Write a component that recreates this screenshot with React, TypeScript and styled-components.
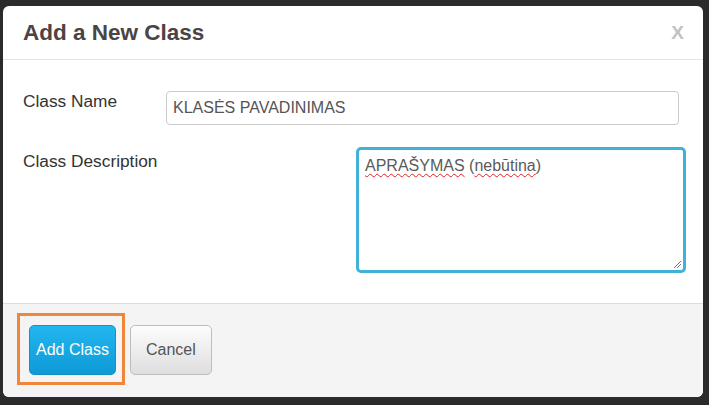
import React from 'react';
import styled, { createGlobalStyle } from 'styled-components';

const GlobalStyle = createGlobalStyle`
  html, body {
    margin: 0;
    padding: 0;
    background: #2b2b2b;
    font-family: "Liberation Sans", Arial, sans-serif;
  }
  * { box-sizing: border-box; }
`;

const Page = styled.div`
  width: 709px;
  height: 405px;
  padding: 6px 0 0 3px;
  background: #2b2b2b;
`;

const Dialog = styled.div`
  width: 700px;
  height: 391px;
  background: #fff;
  border-radius: 6px;
  overflow: hidden;
  display: flex;
  flex-direction: column;
`;

const Header = styled.div`
  height: 54px;
  display: flex;
  align-items: center;
  justify-content: space-between;
  padding: 0 19px 0 20px;
  border-bottom: 1px solid #e5e5e5;
`;

const Title = styled.h3`
  margin: 0;
  font-size: 22.5px;
  font-weight: bold;
  color: #4b4344;
`;

const Close = styled.button`
  border: none;
  background: none;
  padding: 0;
  font-family: inherit;
  font-size: 19px;
  font-weight: bold;
  color: #c2c2c2;
  cursor: pointer;
`;

const Body = styled.div`
  flex: 1;
  padding: 31px 0 0 20px;
  display: flex;
  flex-direction: column;
  gap: 23px;
`;

const Row = styled.div`
  display: flex;
  align-items: flex-start;
`;

const Label = styled.label<{ $width: number; $top: number }>`
  width: ${(p) => p.$width}px;
  flex-shrink: 0;
  padding-top: ${(p) => p.$top}px;
  font-size: 17.3px;
  color: #333;
`;

const Input = styled.input`
  width: 513px;
  height: 34px;
  border: 1px solid #ccc;
  border-radius: 4px;
  padding: 0 6px;
  font-family: inherit;
  font-size: 16px;
  color: #555;
  outline: none;
`;

const TextArea = styled.div`
  position: relative;
  width: 330px;
  height: 126px;
  margin-top: -1px;
  border: 3px solid #41b1da;
  border-radius: 5px;
  padding: 7px 6px;
  font-size: 16px;
  color: #5a5a5a;
  outline: none;
`;

const Misspelled = styled.span`
  text-decoration: underline wavy #e02020;
  text-decoration-thickness: 1px;
  text-underline-offset: 2px;
`;

const Grip = styled.svg`
  position: absolute;
  right: 1px;
  bottom: 1px;
`;

const Footer = styled.div`
  height: 94px;
  background: #f4f4f4;
  border-top: 1px solid #dcdcdc;
  display: flex;
  align-items: flex-start;
  padding: 9px 0 0 14px;
`;

const Highlight = styled.div`
  border: 3px solid #f0863a;
  padding: 9px 6px 7px 9px;
`;

const Button = styled.button<{ $primary?: boolean }>`
  height: 50px;
  padding: 0 ${(p) => (p.$primary ? 6 : 15)}px;
  border-radius: 5px;
  font-family: inherit;
  font-size: 16px;
  cursor: pointer;
  color: ${(p) => (p.$primary ? '#fff' : '#555')};
  border: 1px solid ${(p) => (p.$primary ? '#1591c4' : '#bdbdbd')};
  background: ${(p) =>
    p.$primary
      ? 'linear-gradient(#22b6f0, #0e9ad6)'
      : 'linear-gradient(#fdfdfd, #dedede)'};
`;

const CancelWrap = styled.div`
  padding-top: 12px;
  margin-left: 5px;
`;

export default function App() {
  return (
    <Page>
      <GlobalStyle />
      <Dialog>
        <Header>
          <Title>Add a New Class</Title>
          <Close>X</Close>
        </Header>
        <Body>
          <Row>
            <Label $width={143} $top={0}>Class Name</Label>
            <Input defaultValue="KLASĖS PAVADINIMAS" />
          </Row>
          <Row>
            <Label $width={333} $top={3}>Class Description</Label>
            <TextArea role="textbox">
              <Misspelled>APRAŠYMAS</Misspelled> (<Misspelled>nebūtina</Misspelled>)
              <Grip width="10" height="10" viewBox="0 0 10 10">
                <path d="M9 2 L2 9 M9 5 L5 9" stroke="#777" strokeWidth="1" />
              </Grip>
            </TextArea>
          </Row>
        </Body>
        <Footer>
          <Highlight>
            <Button $primary>Add Class</Button>
          </Highlight>
          <CancelWrap>
            <Button>Cancel</Button>
          </CancelWrap>
        </Footer>
      </Dialog>
    </Page>
  );
}
